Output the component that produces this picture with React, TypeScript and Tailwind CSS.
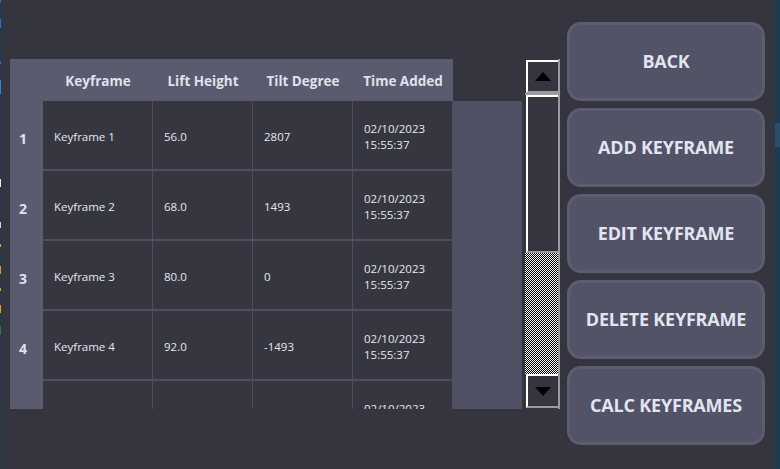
import React from "react";

const rows = [
  { id: "1", name: "Keyframe 1", lift: "56.0", tilt: "2807" },
  { id: "2", name: "Keyframe 2", lift: "68.0", tilt: "1493" },
  { id: "3", name: "Keyframe 3", lift: "80.0", tilt: "0" },
  { id: "4", name: "Keyframe 4", lift: "92.0", tilt: "-1493" },
  // only the top of the time cell peeks out of this row
  { id: "", name: "", lift: "", tilt: "" },
];

const headers = [
  { label: "Keyframe", w: "w-[110px]" },
  { label: "Lift Height", w: "w-[100px]" },
  { label: "Tilt Degree", w: "w-[100px]" },
  { label: "Time Added", w: "w-[100px]" },
];

const buttons = ["BACK", "ADD KEYFRAME", "EDIT KEYFRAME", "DELETE KEYFRAME", "CALC KEYFRAMES"];

const Arrow = ({ up }: { up: boolean }) => (
  <svg width="16" height="9" viewBox="0 0 16 9">
    <polygon points={up ? "8,0 16,9 0,9" : "0,0 16,0 8,9"} fill="#000" />
  </svg>
);

const ScrollBar = () => {
  return (
    <div className="flex flex-col w-[35px] h-[350px] mt-[59px] ml-[3px] border-r-2 border-[#9a9a9a]">
      <div className="h-[1px]" />
      <div className="h-[33px] flex items-center justify-center bg-[#35353f] border-l-2 border-t-2 border-white border-b-2 border-b-[#9a9a9a] ml-[1px]">
        <Arrow up />
      </div>
      <div className="h-[2px] bg-[#9a9a9a]" />
      <div className="h-[158px] bg-[#35353f] border-l-2 border-t-2 border-white border-b-2 border-b-[#9a9a9a] ml-[1px]" />
      <div className="h-[121px] bg-[repeating-conic-gradient(#000_0_25%,#fff_0_50%)] bg-[length:2px_2px]" />
      <div className="h-[34px] flex items-center justify-center bg-[#35353f] border-l-2 border-t-2 border-white border-b-2 border-b-[#9a9a9a] ml-[1px]">
        <Arrow up={false} />
      </div>
    </div>
  );
};

const Table = () => {
  return (
    <div className="flex flex-col w-[512px] h-[350px] mt-[59px]">
      <div className="flex h-[42px] shrink-0">
        <div className="w-[33px] bg-[#5a5b6e]" />
        {headers.map((h) => (
          <div key={h.label} className={`${h.w} bg-[#5a5b6e] flex items-center justify-center pt-[2px] text-[13.5px] font-bold text-[#dfe2ec]`}>
            {h.label}
          </div>
        ))}
      </div>
      <div className="flex-1 overflow-hidden bg-[#505165]">
        <div className="w-[443px]">
          {rows.map((r, i) => (
            <div key={i} className="flex h-[70px]">
              <div className="w-[33px] bg-[#5a5b6e] flex items-center pl-[9px] pt-[5px] text-[14px] font-bold text-[#dfe2ec]">
                {r.id}
              </div>
              <div className="w-[110px] bg-[#363641] border-r border-b-2 border-[#4d4e60] flex items-center pl-[11px] pt-[4px] text-[11.5px] text-[#e6e6ee]">
                {r.name}
              </div>
              <div className="w-[100px] bg-[#363641] border-r border-b-2 border-[#4d4e60] flex items-center pl-[11px] pt-[4px] text-[11.5px] text-[#e6e6ee]">
                {r.lift}
              </div>
              <div className="w-[100px] bg-[#363641] border-r border-b-2 border-[#4d4e60] flex items-center pl-[11px] pt-[4px] text-[11.5px] text-[#e6e6ee]">
                {r.tilt}
              </div>
              <div className="w-[100px] bg-[#363641] border-r border-b-2 border-[#4d4e60] flex flex-col justify-center pl-[11px] pt-[4px] text-[11.5px] leading-[16px] text-[#e6e6ee]">
                <span>02/10/2023</span>
                <span>15:55:37</span>
              </div>
            </div>
          ))}
        </div>
      </div>
    </div>
  );
};

const Buttons = () => {
  return (
    <div className="flex flex-col gap-[7px] w-[198px] mt-[22px] ml-[7px]">
      {buttons.map((b) => (
        <button
          key={b}
          className="h-[79px] rounded-[14px] border-[3px] border-[#5c5d71] bg-[#525367] text-[18px] font-bold text-[#e2e5ef] tracking-[-0.2px]"
        >
          {b}
        </button>
      ))}
    </div>
  );
};

export default function App() {
  return (
    <div className="flex w-[780px] h-[469px] bg-[#35353f] overflow-hidden font-['Open_Sans',sans-serif]">
      <div className="w-[1px] flex flex-col bg-[#1c3a53]">
        <div className="h-[3px] bg-[#1a78d6]" />
        <div className="h-[16px]" />
        <div className="h-[9px] bg-[#1a78d6]" />
        <div className="h-[33px]" />
        <div className="h-[3px] bg-[#1a78d6]" />
        <div className="h-[16px]" />
        <div className="h-[14px] bg-[#2a8ae0]" />
        <div className="h-[85px]" />
        <div className="h-[8px] bg-[#e8eef5]" />
        <div className="h-[35px]" />
        <div className="h-[6px] bg-[#c8d4e0]" />
        <div className="h-[16px]" />
        <div className="h-[3px] bg-[#e0a020]" />
        <div className="h-[19px]" />
        <div className="h-[8px] bg-[#d0a020]" />
        <div className="h-[14px]" />
        <div className="h-[3px] bg-[#e0a020]" />
        <div className="h-[14px]" />
        <div className="h-[8px] bg-[#e0a020]" />
        <div className="h-[13px]" />
        <div className="h-[9px] bg-[#2e7a3a]" />
      </div>
      <div className="flex flex-1 pl-[9px]">
        <Table />
        <ScrollBar />
        <Buttons />
      </div>
      <div className="w-[5px] flex flex-col bg-[#1c3a50]">
        <div className="h-[123px]" />
        <div className="h-[24px] bg-[#27506e]" />
      </div>
    </div>
  );
}
